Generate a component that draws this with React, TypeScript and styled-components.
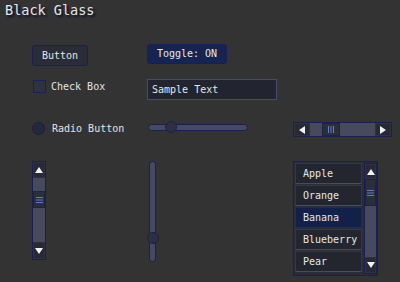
import React from 'react';
import styled, { createGlobalStyle } from 'styled-components';

const Global = createGlobalStyle`
  html, body { margin: 0; padding: 0; background: #333333; }
  body { width: 400px; height: 282px; overflow: hidden; font-family: "DejaVu Sans Mono", monospace; }
`;

const Page = styled.div`
  width: 400px;
  height: 282px;
  box-sizing: border-box;
  padding: 2px 0 0 5px;
  color: #e4e4e4;
  font: 10px "DejaVu Sans Mono", monospace;
`;

const Title = styled.h1`
  margin: 0;
  font: normal 13.5px/17px "DejaVu Sans Mono", monospace;
  color: #e6e6e6;
  text-shadow: 2px 2px 2px #0b0f2a;
`;

const Grid = styled.div`
  display: grid;
  grid-template-columns: 115px 146px auto;
  grid-template-rows: 35px 43px 39px auto;
  margin: 25px 0 0 27px;
  align-items: start;
`;

const Button = styled.button<{ $on?: boolean }>`
  box-sizing: border-box;
  width: ${p => (p.$on ? '80px' : '56px')};
  height: ${p => (p.$on ? '20px' : '21px')};
  margin-top: ${p => (p.$on ? '0' : '1px')};
  padding: 0;
  border: 1px solid ${p => (p.$on ? '#14205a' : '#1b1f4d')};
  border-radius: 3px;
  background: ${p => (p.$on ? '#17244f' : '#2a2d38')};
  color: #e6e6e6;
  font: 10px "DejaVu Sans Mono", monospace;
  line-height: 18px;
`;

const Row = styled.div<{ $gap: number; $top?: number; $left?: number }>`
  display: flex;
  align-items: center;
  gap: ${p => p.$gap}px;
  margin-top: ${p => p.$top ?? 0}px;
  margin-left: ${p => p.$left ?? 0}px;
  color: #e4e4e4;
`;

const CheckBox = styled.div`
  box-sizing: border-box;
  width: 13px;
  height: 13px;
  border: 1px solid #1b1f55;
  background: #2d3140;
`;

const Radio = styled.div`
  box-sizing: border-box;
  width: 13px;
  height: 13px;
  border-radius: 50%;
  border: 1px solid #191d45;
  background: #24283a;
`;

const Input = styled.div`
  box-sizing: border-box;
  width: 130px;
  height: 21px;
  padding-left: 4px;
  border: 1px solid #454a6e;
  background: #22252f;
  color: #e6e6e6;
  line-height: 19px;
`;

const Slider = styled.div<{ $vertical?: boolean; $left?: number }>`
  position: relative;
  box-sizing: border-box;
  width: ${p => (p.$vertical ? '7px' : '100px')};
  height: ${p => (p.$vertical ? '101px' : '7px')};
  margin: ${p => (p.$vertical ? `0 0 0 ${p.$left ?? 0}px` : `2px 0 0 ${p.$left ?? 0}px`)};
  border: 1px solid #1a1e50;
  border-radius: 4px;
  background: #454a64;
`;

const Knob = styled.div`
  position: absolute;
  box-sizing: border-box;
  width: 12px;
  height: 12px;
  border-radius: 50%;
  border: 1px solid #1a1e50;
  background: #2c3040;
`;

const Bar = styled.div<{ $vertical?: boolean; $w: number; $h: number }>`
  display: flex;
  flex-direction: ${p => (p.$vertical ? 'column' : 'row')};
  box-sizing: border-box;
  width: ${p => p.$w}px;
  height: ${p => p.$h}px;
  border: 1px solid #1a1e52;
  background: #1a1e52;
`;

const Arrow = styled.div<{ $vertical?: boolean; $size: number }>`
  flex: none;
  box-sizing: border-box;
  width: ${p => (p.$vertical ? '100%' : `${p.$size}px`)};
  height: ${p => (p.$vertical ? `${p.$size}px` : '100%')};
  background: #272a35;
  border: 1px solid #30333f;
  display: flex;
  align-items: center;
  justify-content: center;
`;

const Track = styled.div<{ $vertical?: boolean; $offset: number }>`
  flex: 1;
  display: flex;
  flex-direction: ${p => (p.$vertical ? 'column' : 'row')};
  background: #464a5c;
  ${p => (p.$vertical ? `padding-top: ${p.$offset}px;` : `padding-left: ${p.$offset}px;`)}
`;

const Thumb = styled.div<{ $vertical?: boolean; $len: number }>`
  flex: none;
  box-sizing: border-box;
  width: ${p => (p.$vertical ? '100%' : `${p.$len}px`)};
  height: ${p => (p.$vertical ? `${p.$len}px` : '100%')};
  background: #2b2f3c;
  border: 1px solid #20243a;
  display: flex;
  align-items: center;
  justify-content: center;
`;

const ListBox = styled.div`
  display: flex;
  gap: 2px;
  box-sizing: border-box;
  width: 85px;
  height: 115px;
  padding: 1px 0 0 1px;
  border: 1px solid #1a1e52;
  background: #2a2d36;
`;

const Items = styled.div`
  width: 67px;
  display: flex;
  flex-direction: column;
  gap: 1px;
`;

const Item = styled.div<{ $selected?: boolean }>`
  box-sizing: border-box;
  height: 21px;
  padding-left: 7px;
  border: 1px solid ${p => (p.$selected ? '#1d2c66' : '#353841')};
  border-bottom-color: ${p => (p.$selected ? '#1d2c66' : '#4a4d56')};
  background: ${p => (p.$selected ? '#13214a' : '#23262e')};
  color: #e6e6e6;
  line-height: 19px;
`;

const Tri = ({ dir }: { dir: 'up' | 'down' | 'left' | 'right' }) => {
  const pts = {
    up: '0,6 4,0 8,6',
    down: '0,0 8,0 4,6',
    left: '6,0 6,8 0,4',
    right: '0,0 0,8 6,4',
  }[dir];
  const w = dir === 'up' || dir === 'down' ? 8 : 6;
  const h = dir === 'up' || dir === 'down' ? 6 : 8;
  return (
    <svg width={w} height={h} viewBox={`0 0 ${w} ${h}`}>
      <polygon points={pts} fill="#f2f2f2" />
    </svg>
  );
};

const Grip = ({ vertical }: { vertical?: boolean }) =>
  vertical ? (
    <svg width="7" height="6" viewBox="0 0 7 6">
      <rect x="0" y="0" width="7" height="1" fill="#6478cc" />
      <rect x="0" y="2.5" width="7" height="1" fill="#6478cc" />
      <rect x="0" y="5" width="7" height="1" fill="#6478cc" />
    </svg>
  ) : (
    <svg width="6" height="7" viewBox="0 0 6 7">
      <rect x="0" y="0" width="1" height="7" fill="#6478cc" />
      <rect x="2.5" y="0" width="1" height="7" fill="#6478cc" />
      <rect x="5" y="0" width="1" height="7" fill="#6478cc" />
    </svg>
  );

type SBProps = {
  vertical?: boolean;
  w: number;
  h: number;
  a: number;
  b: number;
  offset: number;
  len: number;
};

const ScrollBar = ({ vertical, w, h, a, b, offset, len }: SBProps) => (
  <Bar $vertical={vertical} $w={w} $h={h}>
    <Arrow $vertical={vertical} $size={a}>
      <Tri dir={vertical ? 'up' : 'left'} />
    </Arrow>
    <Track $vertical={vertical} $offset={offset}>
      <Thumb $vertical={vertical} $len={len}>
        <Grip vertical={vertical} />
      </Thumb>
    </Track>
    <Arrow $vertical={vertical} $size={b}>
      <Tri dir={vertical ? 'down' : 'right'} />
    </Arrow>
  </Bar>
);

const ListScroll = styled.div`
  width: 13px;
  height: 111px;
  display: flex;
`;

export default function App() {
  const fruits = ['Apple', 'Orange', 'Banana', 'Blueberry', 'Pear'];
  return (
    <>
      <Global />
      <Page>
        <Title>Black Glass</Title>
        <Grid>
          <Button>Button</Button>
          <Button $on>Toggle: ON</Button>
          <div />

          <Row $gap={5} $top={1} $left={1}>
            <CheckBox />
            <span>Check Box</span>
          </Row>
          <Input>Sample Text</Input>
          <div />

          <Row $gap={7}>
            <Radio />
            <span>Radio Button</span>
          </Row>
          <Slider $left={1}>
            <Knob style={{ left: 16, top: -4 }} />
          </Slider>
          <ScrollBar w={99} h={15} a={16} b={16} offset={12} len={18} />

          <ScrollBar vertical w={14} h={99} a={16} b={17} offset={13} len={17} />
          <Slider $vertical $left={2}>
            <Knob style={{ left: -3.5, top: 70 }} />
          </Slider>
          <ListBox>
            <Items>
              {fruits.map(f => (
                <Item key={f} $selected={f === 'Banana'}>
                  {f}
                </Item>
              ))}
            </Items>
            <ListScroll>
              <ScrollBar vertical w={13} h={111} a={15} b={16} offset={0} len={27} />
            </ListScroll>
          </ListBox>
        </Grid>
      </Page>
    </>
  );
}
